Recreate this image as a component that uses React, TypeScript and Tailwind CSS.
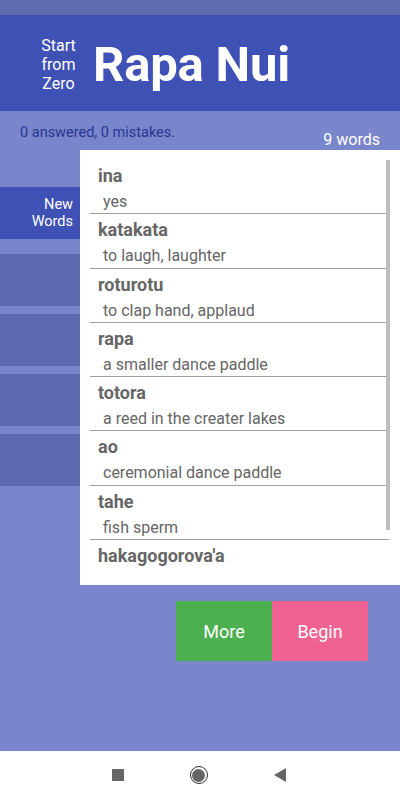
const words = [
  { w: "ina", d: "yes" },
  { w: "katakata", d: "to laugh, laughter" },
  { w: "roturotu", d: "to clap hand, applaud" },
  { w: "rapa", d: "a smaller dance paddle" },
  { w: "totora", d: "a reed in the creater lakes" },
  { w: "ao", d: "ceremonial dance paddle" },
  { w: "tahe", d: "fish sperm" },
  { w: "hakagogorova'a", d: "" },
]

export default function App() {
  return (
    <div className="w-[400px] h-[800px] flex flex-col overflow-hidden bg-[#7986cb] font-['Roboto',sans-serif]">
      {/* status bar */}
      <div className="h-[15px] bg-[#5f6cb0]" />

      {/* header */}
      <div className="h-[96px] bg-[#3f51b5] flex items-center text-white">
        <div className="w-[77px] pl-[40px] text-[16px] leading-[19px] text-center pt-[3px]">
          Start
          <br />
          from
          <br />
          Zero
        </div>
        <div className="ml-[16px] text-[49px] font-bold leading-none tracking-[-0.2px] pt-[3px]">Rapa Nui</div>
      </div>

      {/* body */}
      <div className="flex-1 flex flex-col">
        <div className="h-[39px] flex justify-between pl-[20px] pr-[20px]">
          <div className="text-[14.5px] text-[#283593] pt-[11px]">0 answered, 0 mistakes.</div>
          <div className="text-[16px] text-white pt-[17px]">9 words</div>
        </div>

        <div className="flex">
          {/* side tabs */}
          <div className="w-[80px] shrink-0 pt-[37px] flex flex-col gap-[8px]">
            <div className="h-[52px] bg-[#3f51b5] text-white text-[14.5px] leading-[17px] text-right pr-[7px] flex flex-col justify-center pb-[1px]">
              <span>New</span>
              <span>Words</span>
            </div>
            <div className="h-[52px] bg-[#5c6bb0] mt-[7px]" />
            <div className="h-[52px] bg-[#5c6bb0]" />
            <div className="h-[52px] bg-[#5c6bb0]" />
            <div className="h-[52px] bg-[#5c6bb0]" />
          </div>

          {/* word list */}
          <div className="relative flex-1 h-[435px] bg-white overflow-hidden pt-[10px] pl-[10px] pr-[11px]">
            {words.map((x) => (
              <div key={x.w} className="h-[54.3px] box-border border-b border-[#9e9e9e] pl-[8px] pt-[5px]">
                <div className="text-[18px] leading-[22px] font-bold text-[#666666]">{x.w}</div>
                <div className="text-[16px] leading-[22px] mt-[4px] text-[#666666] pl-[5px]">{x.d}</div>
              </div>
            ))}
            <div className="absolute right-[10px] top-[10px] w-[4px] h-[370px] bg-[#bdbdbd]" />
          </div>
        </div>

        <div className="flex justify-end pr-[32px] mt-[16px]">
          <button className="w-[96px] h-[60px] bg-[#4caf50] text-white text-[18px]">More</button>
          <button className="w-[96px] h-[60px] bg-[#f06292] text-white text-[18px]">Begin</button>
        </div>
      </div>

      {/* nav bar */}
      <div className="h-[49px] bg-white flex items-center justify-center gap-[66px] pb-[1px] pr-[2px]">
        <div className="w-[12px] h-[12px] bg-[#666666]" />
        <div className="w-[18px] h-[18px] rounded-full border-[1.5px] border-[#333] flex items-center justify-center">
          <div className="w-[13px] h-[13px] rounded-full bg-[#666666]" />
        </div>
        <svg width="13" height="14" viewBox="0 0 13 14">
          <path d="M0 7 L12 0 L12 14 Z" fill="#666666" />
        </svg>
      </div>
    </div>
  )
}
